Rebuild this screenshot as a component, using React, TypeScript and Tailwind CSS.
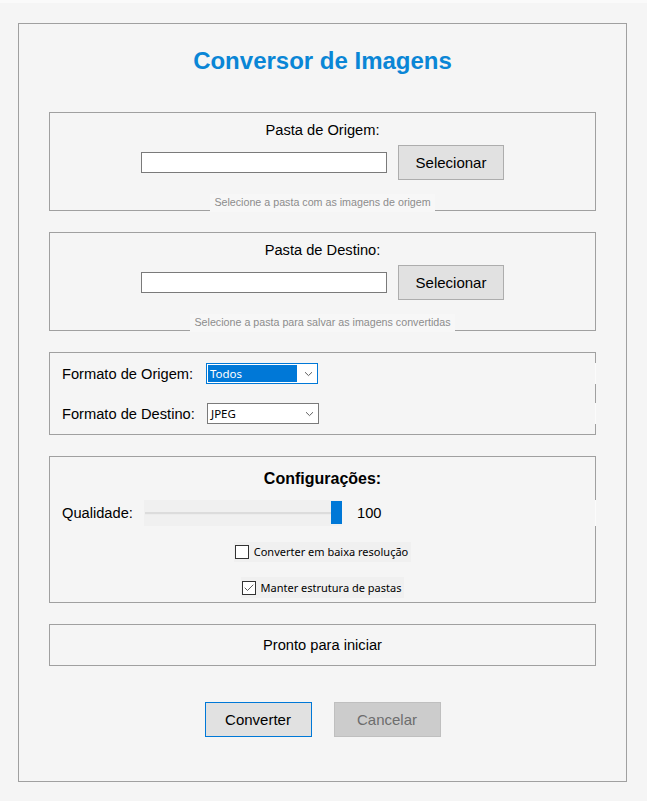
import { Check } from 'lucide-react'

const SANS = "font-['Liberation_Sans',Arial,sans-serif]"
const UI = "font-['Noto_Sans','Open_Sans',sans-serif]"

function Chevron() {
  return (
    <svg width="9" height="6" viewBox="0 0 9 6" className="shrink-0">
      <path d="M1 1.2 L4.5 4.6 L8 1.2" fill="none" stroke="#606060" strokeWidth="1" />
    </svg>
  )
}

function FolderSection({ label, caption }: { label: string; caption: string }) {
  return (
    <div className="h-[99px] border border-[#a0a0a0] flex flex-col items-center">
      <div className="pt-[8px] text-[14.67px] leading-[18px] text-black">{label}</div>
      <div className="mt-[6px] flex items-center gap-[11px]">
        <div className="w-[246px] h-[21px] border border-[#7a7a7a] bg-white" />
        <button className="w-[106px] h-[35px] border border-[#adadad] bg-[#e1e1e1] text-[15px] pt-px text-black">
          Selecionar
        </button>
      </div>
      <div className="mt-auto -mb-[2px] h-[18px] px-[4px] bg-[#f7f7f7] text-[10.7px] leading-[16px] text-[#8c8c8c]">
        {caption}
      </div>
    </div>
  )
}

function Combo({ value, focused }: { value: string; focused?: boolean }) {
  return (
    <div
      className={`w-[112px] h-[21px] bg-white flex items-center pl-[1px] pr-[4px] border ${
        focused ? 'border-[#0078d7]' : 'border-[#7a7a7a]'
      }`}
    >
      <div
        className={`${UI} flex-1 h-[17px] mr-[7px] pl-[2px] text-[11.5px] leading-[17px] ${
          focused ? 'bg-[#0078d7] text-white' : 'text-black'
        }`}
      >
        {value}
      </div>
      <Chevron />
    </div>
  )
}

function CheckRow({ label, checked, className }: { label: string; checked?: boolean; className?: string }) {
  return (
    <div className={`flex items-center bg-[#f0f0f0] pl-[1px] pr-[3px] ${className ?? ''}`}>
      <div className="w-[14px] h-[14px] border border-[#333333] bg-white flex items-center justify-center">
        {checked && <Check className="w-[12px] h-[12px] text-[#333333]" strokeWidth={1.6} />}
      </div>
      <span className={`${UI} ml-[5px] text-[11px] leading-[14px] text-black`}>{label}</span>
    </div>
  )
}

export default function App() {
  return (
    <div className={`${SANS} w-[647px] h-[801px] bg-[#f5f5f5]`}>
      <div className="h-[3px] bg-[#fafafa]" />
      <div className="pt-[20px] pl-[18px]">
        <div className="w-[609px] h-[759px] border border-[#a0a0a0] px-[30px]">
          <h1 className="pt-[24px] text-center text-[24px] leading-[26px] font-bold text-[#0a86d6]">
            Conversor de Imagens
          </h1>

          <div className="mt-[38px] flex flex-col gap-[21px]">
            <FolderSection label="Pasta de Origem:" caption="Selecione a pasta com as imagens de origem" />
            <FolderSection
              label="Pasta de Destino:"
              caption="Selecione a pasta para salvar as imagens convertidas"
            />

            <div className="h-[83px] border border-[#a0a0a0] pt-[10px] flex flex-col gap-[19px]">
              <div className="h-[21px] -mr-px border-r border-[#fbfbfb] pl-[12px] flex items-center">
                <span className="w-[144px] text-[14.67px]">Formato de Origem:</span>
                <Combo value="Todos" focused />
              </div>
              <div className="h-[21px] -mr-px border-r border-[#fbfbfb] pl-[12px] flex items-center">
                <span className="w-[145px] text-[14.67px]">Formato de Destino:</span>
                <Combo value="JPEG" />
              </div>
            </div>

            <div className="h-[147px] border border-[#a0a0a0] pt-[13px] flex flex-col">
              <div className="text-center text-[16px] leading-[18px] font-bold">Configurações:</div>
              <div className="mt-[12px] h-[26px] -mr-px border-r border-[#fbfbfb] pl-[12px] flex items-center">
                <span className="w-[82px] text-[14.67px]">Qualidade:</span>
                <div className="relative w-[198px] h-[26px] bg-[#f0f0f0] flex items-center">
                  <div className="ml-[1px] w-[192px] h-[3px] bg-[#dcdcdc] border-b border-[#ececec]" />
                  <div className="absolute left-[187px] top-[1px] w-[11px] h-[23px] bg-[#0078d7]" />
                </div>
                <span className="ml-[15px] text-[14.67px]">100</span>
              </div>
              <div className="mt-[16px] flex justify-center">
                <CheckRow label="Converter em baixa resolução" className="h-[20px]" />
              </div>
              <div className="mt-[15px] flex justify-center">
                <CheckRow label="Manter estrutura de pastas" checked className="h-[21px]" />
              </div>
            </div>

            <div className="h-[42px] border border-[#a0a0a0] flex items-center justify-center text-[14.67px]">
              Pronto para iniciar
            </div>
          </div>

          <div className="mt-[36px] flex justify-center gap-[22px]">
            <button className="w-[107px] h-[35px] border border-[#0078d7] bg-[#e1e1e1] text-[15px] pt-[2px] text-black">
              Converter
            </button>
            <button className="w-[107px] h-[35px] border border-[#bfbfbf] bg-[#cccccc] text-[15px] pt-[2px] text-[#6d6d6d]">
              Cancelar
            </button>
          </div>
        </div>
      </div>
    </div>
  )
}
